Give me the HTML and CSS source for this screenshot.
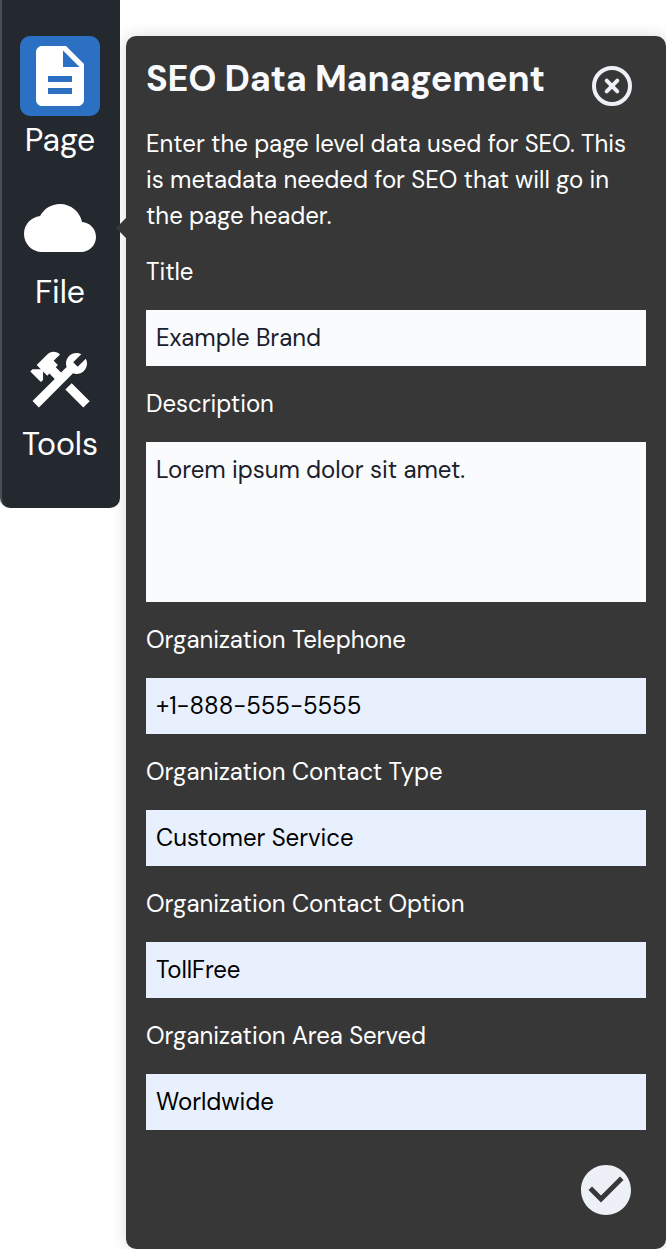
FILE: index.html
```
<!DOCTYPE html>
<html lang="en">
<head>
<meta charset="utf-8">
<title>SEO Data Management</title>
<link rel="stylesheet" href="styles.css">
</head>
<body>
<div class="app">
  <nav class="sidebar">
    <a class="nav-item">
      <span class="nav-icon active"><svg viewBox="0 0 24 24"><path d="M14 2H6c-1.1 0-1.99.9-1.99 2L4 20c0 1.1.89 2 1.99 2H18c1.1 0 2-.9 2-2V8l-6-6zm2 16H8v-2h8v2zm0-4H8v-2h8v2zm-3-5V3.5L18.5 9H13z"/></svg></span>
      <span class="nav-label">Page</span>
    </a>
    <a class="nav-item">
      <span class="nav-icon"><svg viewBox="0 0 24 24"><path d="M19.35 10.04C18.67 6.59 15.64 4 12 4 9.11 4 6.6 5.64 5.35 8.04 2.34 8.36 0 10.91 0 14c0 3.31 2.69 6 6 6h13c2.76 0 5-2.24 5-5 0-2.64-2.05-4.78-4.65-4.96z"/></svg></span>
      <span class="nav-label">File</span>
    </a>
    <a class="nav-item">
      <span class="nav-icon"><svg viewBox="0 0 24 24"><path d="m13.7826 15.1719 2.1213-2.1213 5.9963 5.9962-2.1213 2.1213zM17.5 10c1.93 0 3.5-1.57 3.5-3.5 0-.58-.16-1.12-.41-1.6l-2.7 2.7-1.49-1.49 2.7-2.7c-.48-.25-1.02-.41-1.6-.41C15.57 3 14 4.57 14 6.5c0 .41.08.8.21 1.16l-1.85 1.85-1.78-1.78.71-.71-1.41-1.41L12 3.49c-1.17-1.17-3.07-1.17-4.24 0L4.22 7.03l1.41 1.41H2.81l-.71.71 3.54 3.54.71-.71V9.15l1.41 1.41.71-.71 1.78 1.78-7.41 7.41 2.12 2.12L16.34 9.79c.36.13.75.21 1.16.21z"/></svg></span>
      <span class="nav-label">Tools</span>
    </a>
  </nav>
  <main class="panel">
    <header class="panel-head">
      <h1>SEO Data Management</h1>
      <button class="close" aria-label="Close"><svg viewBox="0 0 40 40"><circle cx="20" cy="20" r="18"/><path d="M14.7 14.7l10.6 10.6M25.3 14.7L14.7 25.3"/></svg></button>
    </header>
    <p class="intro">Enter the page level data used for SEO. This is metadata needed for SEO that will go in the page header.</p>
    <label class="field">Title<input value="Example Brand"></label>
    <label class="field">Description<textarea>Lorem ipsum dolor sit amet.</textarea></label>
    <label class="field">Organization Telephone<input class="filled" value="+1-888-555-5555"></label>
    <label class="field">Organization Contact Type<input class="filled" value="Customer Service"></label>
    <label class="field">Organization Contact Option<input class="filled" value="TollFree"></label>
    <label class="field">Organization Area Served<input class="filled" value="Worldwide"></label>
    <button class="confirm" aria-label="Save"><svg viewBox="0 0 24 24"><path d="M12 2C6.48 2 2 6.48 2 12s4.48 10 10 10 10-4.48 10-10S17.52 2 12 2zm-2 15l-5-5 1.41-1.41L10 14.17l7.59-7.59L19 8l-9 9z"/></svg></button>
  </main>
</div>
</body>
</html>
```
FILE: styles.css
```
* { box-sizing: border-box; }
body { margin: 0; background: #fff; overflow: hidden; font-family: "DM Sans", Lato, sans-serif; }
button { border: 0; padding: 0; background: none; }
svg { display: block; }

.app { display: flex; align-items: flex-start; gap: 6px; width: 666px; height: 1249px; }

.sidebar {
  position: relative;
  z-index: 1;
  width: 120px;
  height: 508px;
  padding: 36px 2px 0 0;
  display: flex;
  flex-direction: column;
  align-items: center;
  gap: 30px;
  background: #242930;
  border-left: 2px solid #4a4f54;
  border-radius: 0 0 10px 10px;
}
.nav-item { display: flex; flex-direction: column; align-items: center; gap: 5px; }
.nav-icon { width: 80px; height: 80px; padding: 4px; border-radius: 10px; }
.nav-icon.active { background: #2b70c3; }
.nav-icon svg { width: 72px; height: 72px; fill: #fff; }
.nav-label { height: 37px; font-size: 32px; line-height: 38px; font-weight: 450; color: #fff; letter-spacing: -.05px; }

.panel {
  position: relative;
  width: 540px;
  height: 1213px;
  margin-top: 36px;
  padding: 20px 20px 0;
  background: #373737;
  border-radius: 10px;
  box-shadow: 0 0 16px rgba(0, 0, 0, .15);
  display: flex;
  flex-direction: column;
  color: #fff;
}
/* Pointer towards the active menu entry */
.panel::before {
  content: "";
  position: absolute;
  z-index: 2;
  left: -10px;
  top: 182px;
  border: 10px solid transparent;
  border-left: 0;
  border-right-color: #373737;
}

.panel-head { height: 70px; display: flex; justify-content: space-between; align-items: flex-start; }
h1 { margin: 0; font-size: 36px; line-height: 46px; font-weight: 700; letter-spacing: -.22px; color: #f8fafd; white-space: nowrap; }
.close { width: 40px; height: 40px; margin: 10px 14px 0 0; }
.close svg { width: 40px; height: 40px; fill: none; stroke: #edf1f7; stroke-width: 4; stroke-linecap: round; }

.intro { margin: 0 0 20px; font-size: 24px; line-height: 36px; font-weight: 450; letter-spacing: -.04px; }
.field { display: flex; flex-direction: column; gap: 20px; margin-bottom: 20px; font-size: 24px; line-height: 36px; font-weight: 450; letter-spacing: -.04px; }
input, textarea {
  display: block;
  width: 500px;
  height: 56px;
  margin: 0;
  padding: 9px 10px 11px;
  border: 0;
  border-radius: 0;
  outline: 0;
  resize: none;
  font: 24px/36px "DM Sans", Lato, sans-serif;
  letter-spacing: -.04px;
  color: #1a202c;
  background: #f9fbfd;
}
textarea { height: 160px; padding: 10px; }
.filled { color: #000; background: #e8f0fe; }

.confirm { align-self: flex-end; width: 60px; height: 60px; margin: 10px 10px 0 0; }
.confirm svg { width: 60px; height: 60px; fill: #edf1f7; }
```
